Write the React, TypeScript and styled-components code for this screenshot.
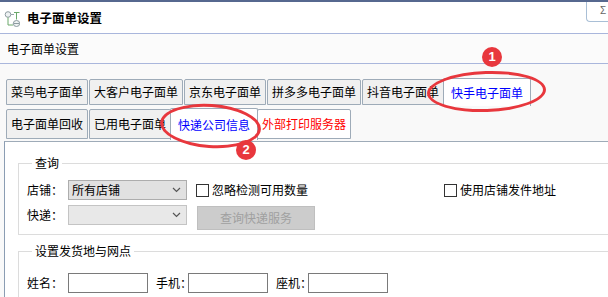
import styled, { createGlobalStyle } from "styled-components";

const GlobalStyle = createGlobalStyle`
  html, body {
    margin: 0;
    padding: 0;
    overflow: hidden;
    background: #fff;
  }
  body {
    font-family: "Noto Sans CJK SC", "Noto Sans", sans-serif;
    font-size: 12px;
    color: #000;
  }
`;

const Window = styled.div`
  position: relative;
  width: 608px;
  height: 297px;
  overflow: hidden;
  background: #f9f9f9;
`;

const TitleBar = styled.div`
  display: flex;
  align-items: center;
  gap: 7px;
  height: 31px;
  padding-left: 4px;
  background: #fff;
  border-top: 2px solid #56688f;
  border-bottom: 1px solid #a9b6dc;
`;

const TitleText = styled.span`
  font-weight: 700;
  font-size: 12.5px;
  line-height: 16px;
`;

const CloseBox = styled.div`
  margin-left: auto;
  align-self: flex-start;
  width: 8px;
  height: 19px;
  padding-left: 13px;
  border-left: 1px solid #a9bfd6;
  border-bottom: 1px solid #a9bfd6;
  border-bottom-left-radius: 4px;
  color: #666;
  font-family: "Liberation Sans", sans-serif;
  font-size: 10px;
  line-height: 18px;
`;

const SubHeader = styled.div`
  display: flex;
  align-items: center;
  height: 29px;
  padding-left: 7px;
  background: #fbfbfb;
  border-bottom: 1px solid #a9b6dc;
  line-height: 16px;
`;

const TabArea = styled.div`
  padding-top: 13px;
`;

const TabRow = styled.div<{ $h: number }>`
  display: flex;
  align-items: flex-end;
  gap: 1px;
  height: ${({ $h }) => $h}px;
  padding-left: 6px;
  margin-bottom: 2px;
  &:last-child {
    margin-bottom: 0;
  }
`;

const Tab = styled.div<{ $active?: boolean; $white?: boolean; $color?: string; $h: number }>`
  position: relative;
  z-index: ${({ $active }) => ($active ? 2 : 1)};
  display: flex;
  align-items: center;
  box-sizing: border-box;
  height: ${({ $h, $active }) => ($active ? $h + 2 : $h)}px;
  padding: 0 ${({ $active }) => ($active ? 7 : 4)}px;
  margin: 0 ${({ $active }) => ($active ? "-2px" : "0")};
  margin-bottom: ${({ $active }) => ($active ? "-1px" : "0")};
  border: 1px solid #9eabb8;
  border-bottom: ${({ $active }) => ($active ? "none" : "1px solid #9eabb8")};
  border-radius: 2px 2px 0 0;
  background: ${({ $active, $white }) => ($active || $white ? "#fff" : "#f0f0f0")};
  color: ${({ $color }) => $color ?? "#000"};
  line-height: 16px;
  white-space: nowrap;
`;

const Panel = styled.div`
  margin-left: 4px;
  padding: 13px 0 0 13px;
  height: 200px;
  background: #fff;
  border-top: 1px solid #9eabb8;
  border-left: 1px solid #8b9db3;
`;

const Group = styled.fieldset<{ $top?: number; $pad?: number }>`
  margin: ${({ $top }) => $top ?? 0}px 0 0 0;
  padding: ${({ $pad }) => $pad ?? 9}px 0 4px 8px;
  width: 640px;
  min-width: 0;
  border: 1px solid #dcdcdc;
`;

const GroupTitle = styled.legend`
  margin-left: 5px;
  padding: 0 3px;
  line-height: 16px;
`;

const FieldRow = styled.div<{ $gap?: number }>`
  display: flex;
  align-items: flex-start;
  margin-top: ${({ $gap }) => $gap ?? 0}px;
`;

const FieldLabel = styled.span<{ $w: number; $ml?: number }>`
  flex: none;
  width: ${({ $w }) => $w}px;
  margin-left: ${({ $ml }) => $ml ?? 0}px;
  line-height: 20px;
  white-space: nowrap;
`;

const Select = styled.div<{ $disabled?: boolean }>`
  flex: none;
  display: flex;
  align-items: center;
  justify-content: space-between;
  box-sizing: border-box;
  width: 119px;
  height: 20px;
  padding: 0 5px 0 3px;
  background: ${({ $disabled }) => ($disabled ? "#e8e8e8" : "#e1e1e1")};
  border: 1px solid ${({ $disabled }) => ($disabled ? "#c4c4c4" : "#adadad")};
  line-height: 16px;
`;

const Check = styled.label<{ $ml: number }>`
  display: flex;
  align-items: center;
  gap: 3px;
  height: 20px;
  margin-left: ${({ $ml }) => $ml}px;
  line-height: 16px;
  white-space: nowrap;
`;

const Box = styled.span`
  box-sizing: border-box;
  width: 13px;
  height: 13px;
  border: 1px solid #333;
  background: #fff;
`;

const DisabledButton = styled.div`
  flex: none;
  display: flex;
  align-items: center;
  justify-content: center;
  box-sizing: border-box;
  width: 118px;
  height: 24px;
  margin: 1px 0 0 10px;
  background: #cccccc;
  border: 1px solid #bfbfbf;
  color: #a0a0a0;
  line-height: 16px;
`;

const TextInput = styled.div<{ $w?: number }>`
  flex: none;
  box-sizing: border-box;
  width: ${({ $w }) => $w ?? 80}px;
  height: 20px;
  background: #fff;
  border: 1px solid #7a7a7a;
`;

const Ring = styled.div<{ $x: number; $y: number; $w: number; $h: number; $rot?: number }>`
  position: absolute;
  left: ${({ $x }) => $x}px;
  top: ${({ $y }) => $y}px;
  width: ${({ $w }) => $w}px;
  height: ${({ $h }) => $h}px;
  box-sizing: border-box;
  border: 3px solid #e8373d;
  border-radius: 50%;
  transform: rotate(${({ $rot }) => $rot ?? 0}deg);
  pointer-events: none;
  z-index: 5;
`;

const Badge = styled.div<{ $x: number; $y: number }>`
  position: absolute;
  left: ${({ $x }) => $x - 10}px;
  top: ${({ $y }) => $y - 10}px;
  width: 20px;
  height: 20px;
  border-radius: 50%;
  background: #e8373d;
  color: #fff;
  font-family: "Liberation Sans", sans-serif;
  font-weight: 700;
  font-size: 13px;
  line-height: 20px;
  text-align: center;
  z-index: 6;
`;

function NetIcon() {
  return (
    <svg width="16" height="16" viewBox="0 0 16 16" style={{ marginTop: 2 }}>
      <circle cx="4" cy="3.5" r="2.8" fill="#eef2f3" stroke="#8d9ba1" />
      <line x1="4" y1="6.5" x2="4" y2="14" stroke="#6aa86a" />
      <line x1="4" y1="14" x2="9" y2="14" stroke="#6aa86a" />
      <line x1="7" y1="3.5" x2="10" y2="3.5" stroke="#9aa5aa" />
      <line x1="10" y1="1.5" x2="15.5" y2="1.5" stroke="#6aa86a" />
      <line x1="12.5" y1="1.5" x2="12.5" y2="8.5" stroke="#6aa86a" />
      <ellipse cx="12.5" cy="12.5" rx="3.2" ry="3" fill="#eef2f3" stroke="#8d9ba1" />
      <line x1="9.5" y1="12.5" x2="15.5" y2="12.5" stroke="#8d9ba1" />
    </svg>
  );
}

function Chevron() {
  return (
    <svg width="9" height="6" viewBox="0 0 9 6">
      <polyline points="1,1 4.5,4.5 8,1" fill="none" stroke="#555" strokeWidth="1.2" />
    </svg>
  );
}

const row1 = [
  { label: "菜鸟电子面单" },
  { label: "大客户电子面单" },
  { label: "京东电子面单" },
  { label: "拼多多电子面单" },
  { label: "抖音电子面单" },
  { label: "快手电子面单", active: true, color: "#0000ff" },
];

const row2 = [
  { label: "电子面单回收" },
  { label: "已用电子面单" },
  { label: "快递公司信息", active: true, color: "#0000ff" },
  { label: "外部打印服务器", white: true, color: "#ff0000" },
];

export default function App() {
  return (
    <Window>
      <GlobalStyle />
      <TitleBar>
        <NetIcon />
        <TitleText>电子面单设置</TitleText>
        <CloseBox>Σ</CloseBox>
      </TitleBar>
      <SubHeader>电子面单设置</SubHeader>

      <TabArea>
        <TabRow $h={28}>
          {row1.map((t) => (
            <Tab key={t.label} $h={26} $active={t.active} $color={t.color}>
              {t.label}
            </Tab>
          ))}
        </TabRow>
        <TabRow $h={32}>
          {row2.map((t) => (
            <Tab key={t.label} $h={30} $active={t.active} $white={t.white} $color={t.color}>
              {t.label}
            </Tab>
          ))}
        </TabRow>
        <Panel>
          <Group>
            <GroupTitle>查询</GroupTitle>
            <FieldRow>
              <FieldLabel $w={41}>店铺：</FieldLabel>
              <Select>
                <span>所有店铺</span>
                <Chevron />
              </Select>
              <Check $ml={9}>
                <Box />
                忽略检测可用数量
              </Check>
              <Check $ml={136}>
                <Box />
                使用店铺发件地址
              </Check>
            </FieldRow>
            <FieldRow $gap={5}>
              <FieldLabel $w={41}>快递：</FieldLabel>
              <Select $disabled>
                <span />
                <Chevron />
              </Select>
              <DisabledButton>查询快递服务</DisabledButton>
            </FieldRow>
          </Group>

          <Group $top={8} $pad={14}>
            <GroupTitle>设置发货地与网点</GroupTitle>
            <FieldRow>
              <FieldLabel $w={41}>姓名：</FieldLabel>
              <TextInput />
              <FieldLabel $w={32} $ml={8}>手机：</FieldLabel>
              <TextInput />
              <FieldLabel $w={32} $ml={8}>座机：</FieldLabel>
              <TextInput />
            </FieldRow>
            <FieldRow $gap={5}>
              <FieldLabel $w={41} />
              <TextInput $w={320} />
            </FieldRow>
          </Group>
        </Panel>
      </TabArea>

      <Ring $x={427} $y={71} $w={119} $h={41} $rot={-2} />
      <Badge $x={492} $y={57}>1</Badge>
      <Ring $x={160} $y={104} $w={101} $h={44} $rot={4} />
      <Badge $x={246} $y={150}>2</Badge>
    </Window>
  );
}
